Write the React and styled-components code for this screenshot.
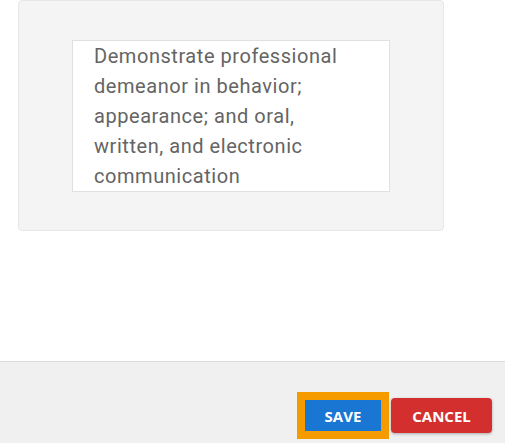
import React from "react"
import styled, { createGlobalStyle } from "styled-components"

const GlobalStyle = createGlobalStyle`
  html, body {
    margin: 0;
    padding: 0;
    background: #ffffff;
  }
  #root {
    width: 505px;
    height: 443px;
  }
`

const Page = styled.div`
  width: 505px;
  height: 443px;
  display: flex;
  flex-direction: column;
  font-family: Roboto, "Liberation Sans", sans-serif;
`

const Body = styled.div`
  flex: 1;
  padding: 0 60px 0 18px;
`

const Card = styled.div`
  width: 426px;
  height: 231px;
  box-sizing: border-box;
  background: #f4f4f4;
  border: 1px solid #e7e7e7;
  border-radius: 4px;
  padding: 39px 54px 0 53px;
`

const TextBox = styled.div`
  box-sizing: border-box;
  width: 318px;
  height: 152px;
  background: #ffffff;
  border: 1px solid #e0e0e0;
  padding: 0 40px 0 21px;
  font-size: 20px;
  line-height: 30px;
  letter-spacing: 0.55px;
  color: #646464;
`

const Footer = styled.div`
  height: 82px;
  box-sizing: border-box;
  background: #f0f0f0;
  border-top: 1px solid #dcdcdc;
  display: flex;
  justify-content: flex-end;
  align-items: flex-start;
  padding: 38px 13px 0 0;
  gap: 10px;
`

const Button = styled.button`
  border: none;
  border-radius: ${p => (p.focused ? "0" : "4px")};
  background: ${p => p.bg};
  color: #ffffff;
  font-family: "Open Sans", "Liberation Sans", sans-serif;
  font-weight: 700;
  font-size: 15px;
  text-transform: uppercase;
  height: ${p => p.h}px;
  width: ${p => p.w}px;
  padding: 0;
  cursor: pointer;
  outline: ${p => (p.focused ? "8px solid #f59b00" : "none")};
  box-shadow: ${p => (p.focused ? "none" : "0 1px 3px rgba(0,0,0,0.3)")};
  margin-top: ${p => p.mt}px;
`

export default function App() {
  return (
    <Page>
      <GlobalStyle />
      <Body>
        <Card>
          <TextBox>
            Demonstrate professional demeanor in behavior; appearance; and
            oral, written, and electronic communication
          </TextBox>
        </Card>
      </Body>
      <Footer>
        <Button focused bg="#1976d2" w={76} h={31} mt={0}>
          Save
        </Button>
        <Button bg="#d32f2f" w={101} h={35} mt={-2}>
          Cancel
        </Button>
      </Footer>
    </Page>
  )
}
